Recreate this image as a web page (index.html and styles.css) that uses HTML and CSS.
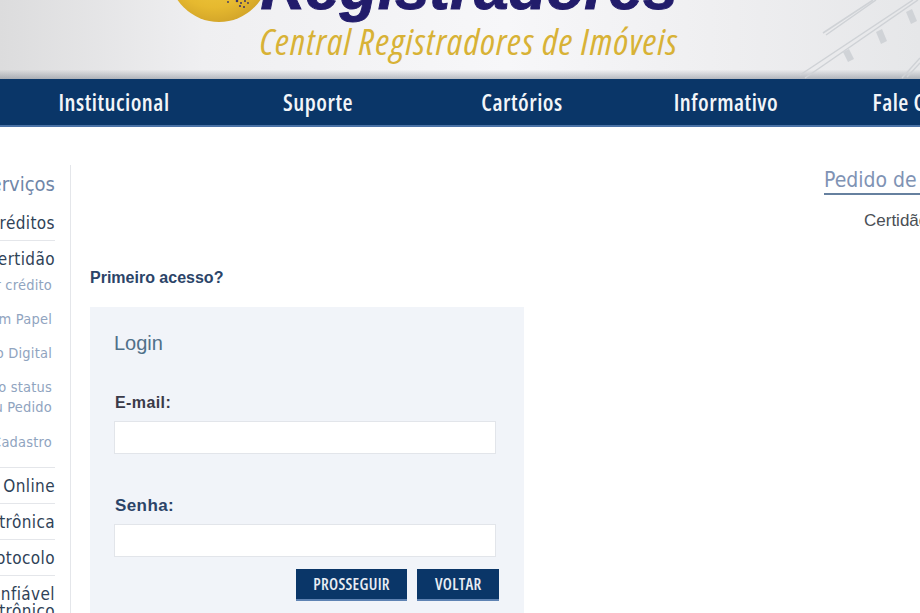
FILE: index.html
```html
<!DOCTYPE html>
<html lang="pt-BR">
<head>
    <meta charset="UTF-8">
    <meta name="viewport" content="width=device-width, initial-scale=1.0">
    <title>Central Registradores de Imóveis</title>
    <link rel="stylesheet" href="styles.css">
</head>
<body>
    <header class="top">
        <svg class="seal" viewBox="0 0 100 100" aria-hidden="true">
            <defs>
                <radialGradient id="gold" cx="45%" cy="40%" r="65%">
                    <stop offset="0" stop-color="#f3d049"/>
                    <stop offset="0.7" stop-color="#e6b92f"/>
                    <stop offset="1" stop-color="#cfa128"/>
                </radialGradient>
            </defs>
            <circle cx="50" cy="50" r="50" fill="url(#gold)"/>
            <g fill="#3b3466">
                <circle cx="59" cy="80" r="0.9"/>
                <circle cx="68" cy="79" r="1.3"/>
                <circle cx="72" cy="81" r="1"/>
                <circle cx="76" cy="79" r="1"/>
                <circle cx="71" cy="84" r="1.1"/>
                <circle cx="75" cy="85" r="1"/>
                <circle cx="79" cy="81" r="0.9"/>
            </g>
        </svg>
        <svg class="plans" viewBox="0 0 130 80" aria-hidden="true">
            <g fill="none" stroke="#cfd2d6" stroke-width="1.5">
                <path d="M10 75 L123 0 M15 78 L128 0"/>
                <path d="M33 33 L83 0 M36 35 L86 0"/>
                <path d="M117 77 L130 63 M112 78 L130 58"/>
            </g>
            <g fill="#d0d3d7">
                <path d="M86 32 l6 -3 l5 12 l-6 3 z"/>
                <path d="M53 52 l6 -3 l5 10 l-6 3 z"/>
                <path d="M116 12 l6 -3 l5 12 l-6 3 z"/>
            </g>
        </svg>
        <div class="brand">
            <div class="brand-name">Registradores</div>
            <div class="brand-sub">Central Registradores de Imóveis</div>
        </div>
    </header>

    <nav class="menu">
        <a href="#">Institucional</a>
        <a href="#">Suporte</a>
        <a href="#">Cartórios</a>
        <a href="#">Informativo</a>
        <a href="#">Fale Conosco</a>
    </nav>

    <div class="page">
        <aside class="side">
            <h3>Serviços</h3>
            <ul>
                <li class="group"><span>Créditos</span></li>
                <li class="group first-sub"><span>Certidão</span></li>
                <li class="sub"><span>Comprar crédito</span></li>
                <li class="sub"><span>Certidão em Papel</span></li>
                <li class="sub"><span>Pedido Digital</span></li>
                <li class="sub"><span>Ver o status<br>do seu Pedido</span></li>
                <li class="sub last-sub"><span>Cadastro</span></li>
                <li class="group"><span>Pesquisa Online</span></li>
                <li class="group"><span>Matrícula Eletrônica</span></li>
                <li class="group"><span>Protocolo</span></li>
                <li class="group tall"><span>Site Confiável<br>Eletrônico</span></li>
            </ul>
        </aside>

        <main class="content">
            <p class="first-access">Primeiro acesso?</p>
            <form class="login">
                <h2>Login</h2>
                <label for="email">E-mail:</label>
                <input type="text" id="email" name="email">
                <label for="senha" class="label-senha">Senha:</label>
                <input type="password" id="senha" name="senha">
                <div class="actions">
                    <button type="submit">PROSSEGUIR</button>
                    <button type="button">VOLTAR</button>
                </div>
            </form>
        </main>

        <aside class="orders">
            <h3>Pedido de Certidão</h3>
            <p>Certidão</p>
        </aside>
    </div>
</body>
</html>
```

FILE: styles.css
```css
html, body {
    margin: 0;
    height: 613px;
    overflow: hidden;
    background-color: white;
}
body {
    font-family: "Liberation Sans", Arial, sans-serif;
}
.top {
    position: relative;
    height: 79px;
    overflow: hidden;
    background: linear-gradient(to bottom, rgba(0,0,0,0) 88%, rgba(90,100,115,0.4) 100%),
                linear-gradient(to right, #dcdcdd 0%, #efeff1 22%, #f7f7f9 55%, #eeeef0 80%, #e6e7e9 100%);
}
.seal {
    position: absolute;
    left: 169px;
    top: -78px;
    width: 100px;
    height: 100px;
}
.plans {
    position: absolute;
    left: 790px;
    top: 0;
    width: 130px;
    height: 80px;
}
.brand {
    position: relative;
    margin-left: 258px;
    margin-top: -46px;
    width: 422px;
    text-align: center;
}
.brand-name {
    font-size: 62px;
    line-height: 68px;
    font-weight: bold;
    font-style: italic;
    color: #221c6b;
    -webkit-text-stroke: 1px #221c6b;
    white-space: nowrap;
}
.brand-sub {
    margin-top: 1px;
    font-family: "Open Sans", sans-serif;
    font-stretch: 75%;
    font-size: 37px;
    line-height: 36px;
    letter-spacing: 1.1px;
    font-style: italic;
    color: #d8b236;
    white-space: nowrap;
}
.menu {
    display: flex;
    height: 48px;
    padding-left: 12px;
    align-items: center;
    overflow: hidden;
    background-color: #0a3668;
    border-bottom: 2px solid #4a72a6;
    box-sizing: border-box;
}
.menu a {
    flex: 0 0 204px;
    text-align: center;
    font-family: "Open Sans", sans-serif;
    font-stretch: 75%;
    font-size: 23px;
    letter-spacing: 0.5px;
    font-weight: 600;
    color: #f2f5f9;
    text-decoration: none;
    white-space: nowrap;
}
.page {
    display: flex;
    align-items: flex-start;
}
.side {
    flex: 0 0 55px;
    width: 55px;
    margin-top: 38px;
    padding-right: 15px;
    height: 460px;
    border-right: 1px solid #e4e6ea;
    font-family: "DejaVu Sans", sans-serif;
    font-stretch: condensed;
    text-align: right;
}
.side h3 {
    display: flex;
    justify-content: flex-end;
    margin: 6px 0 0;
    font-size: 20px;
    line-height: 26px;
    font-weight: normal;
    color: #6f86a8;
    white-space: nowrap;
}
.side ul {
    margin: 8px 0 0;
    padding: 0;
    list-style: none;
}
.side li {
    display: flex;
    justify-content: flex-end;
    white-space: nowrap;
}
.group {
    padding: 8px 0 7px;
    font-size: 17px;
    letter-spacing: 0.4px;
    line-height: 20px;
    color: #2f4257;
    border-bottom: 1px solid #e4e6ea;
}
.first-sub {
    border-bottom: none;
    padding-bottom: 0;
}
.sub {
    padding: 6px 3px 8px 0;
    font-size: 14.5px;
    letter-spacing: 0.2px;
    line-height: 20px;
    color: #90a4c0;
}
.last-sub {
    padding-top: 7px;
    padding-bottom: 15px;
    border-bottom: 1px solid #e4e6ea;
}
.tall {
    border-bottom: none;
    padding-top: 10px;
    line-height: 17px;
}
.content {
    flex: 0 0 434px;
    margin-left: 19px;
}
.first-access {
    margin: 142px 0 0;
    font-size: 16px;
    line-height: 18px;
    font-weight: bold;
    color: #2b4468;
}
.login {
    margin-top: 20px;
    padding: 24px 28px 40px 24px;
    background-color: #f1f4f9;
}
.login h2 {
    margin: 0;
    font-size: 20px;
    line-height: 24px;
    font-weight: normal;
    color: #4f7089;
}
label {
    display: block;
    margin: 39px 0 9px 1px;
    font-size: 16px;
    letter-spacing: 0.4px;
    line-height: 18px;
    font-weight: bold;
    color: #3a3a48;
}
.label-senha {
    margin-top: 43px;
    margin-bottom: 9px;
    font-size: 17px;
    color: #2b4468;
}
input[type="text"], input[type="password"] {
    display: block;
    width: 100%;
    height: 33px;
    padding: 0 8px;
    border: 1px solid #e2e5ea;
    background-color: white;
    box-sizing: border-box;
}
.actions {
    display: flex;
    justify-content: flex-end;
    gap: 10px;
    margin-top: 12px;
    margin-right: -3px;
}
button {
    height: 32px;
    padding: 0 17.5px;
    border: none;
    border-bottom: 2px solid #5f83b3;
    background-color: #0a3668;
    color: #e8edf4;
    font-family: "Open Sans", sans-serif;
    font-stretch: 75%;
    font-size: 16px;
    letter-spacing: 0.3px;
    font-weight: 600;
    cursor: pointer;
}
.orders {
    margin-left: 300px;
    margin-top: 40px;
    flex: 0 0 96px;
    overflow: hidden;
}
.orders h3 {
    margin: 0;
    padding-bottom: 0;
    font-family: "DejaVu Sans", sans-serif;
    font-stretch: condensed;
    font-size: 21px;
    line-height: 26px;
    font-weight: normal;
    color: #7f93b4;
    border-bottom: 2px solid #66809f;
    white-space: nowrap;
}
.orders p {
    margin: 16px 0 0 40px;
    font-size: 17px;
    line-height: 20px;
    color: #4a4f55;
    white-space: nowrap;
}
```
